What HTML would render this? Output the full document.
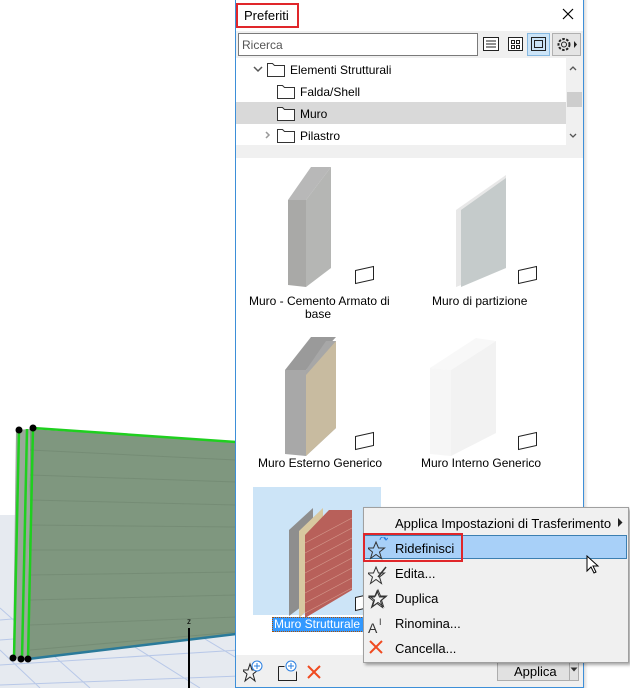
<!DOCTYPE html>
<html><head><meta charset="utf-8"><style>
*{margin:0;padding:0;box-sizing:border-box}
body{width:630px;height:688px;position:relative;overflow:hidden;background:#fff;font-family:"Liberation Sans",sans-serif;font-size:12px;color:#000}
.a{position:absolute}
.t{position:absolute;white-space:nowrap;font-size:12px}
</style></head><body>
<div class="a" style="left:0;top:515px;width:240px;height:173px;background:#e6eaf0"></div>
<svg class="a" style="left:0;top:0" width="240" height="688">
<g stroke="#b8c8e8" stroke-width="1" fill="none">
<path d="M0 620 L240 600 M0 640 L240 622 M0 665 L240 650 M0 685 L240 676 M0 608 L90 688 M0 650 L40 688 M60 600 L200 688 M140 600 L240 660"/>
</g>
<polygon points="30,429 236,442 236,634 28,659" fill="#7f977f"/>
<g stroke="#6f866f" stroke-width="1" opacity=".6">
<path d="M30 450 L236 460 M30 475 L236 482 M30 500 L236 505 M30 525 L236 527 M30 550 L236 550 M30 575 L236 572 M30 600 L236 595 M30 625 L236 617 M30 650 L236 632"/>
</g>
<polygon points="16,430 30,429 28,659 13,658" fill="#9aa89a"/>
<path d="M19 430 L14 658 M27 429 L22 659 M33 428 L28 659 M33 428 L236 442" stroke="#1fcf1f" stroke-width="2.5" fill="none"/>
<path d="M28 659 L236 634" stroke="#2a7a9a" stroke-width="2.5"/>
<g fill="#000"><circle cx="19" cy="430" r="3.5"/><circle cx="33" cy="428" r="3.5"/><circle cx="13" cy="658" r="3.5"/><circle cx="21" cy="659" r="3.5"/><circle cx="28" cy="659" r="3.5"/></g>
<path d="M189 628 L189 688" stroke="#000" stroke-width="2"/>
<text x="187" y="624" font-size="8" font-family="Liberation Sans">z</text>
</svg>

<div class="a" style="left:235px;top:0;width:349px;height:688px;background:#fff;border:1px solid #3d8fd8;border-top:none"></div>
<div class="a" style="left:584px;top:0;width:4px;height:688px;background:linear-gradient(90deg,#ddd,#fff)"></div>
<div class="t" style="left:244px;top:8px;font-size:13px">Preferiti</div>
<div class="a" style="left:236px;top:3px;width:63px;height:25px;border:2px solid #e0262a"></div>
<svg class="a" style="left:562px;top:8px" width="12" height="12"><path d="M1 1L11 11M11 1L1 11" stroke="#000" stroke-width="1.2"/></svg>
<div class="a" style="left:236px;top:31px;width:347px;height:27px;background:#f0f0f0"></div>
<div class="a" style="left:238px;top:33px;width:240px;height:23px;background:#fff;border:1px solid #7a7a7a"></div>
<div class="t" style="left:242px;top:38px;color:#555">Ricerca</div>
<svg class="a" style="left:482px;top:33px" width="100" height="23">
<rect x="1.5" y="4.5" width="15" height="13" fill="#fff" stroke="#222"/><path d="M4 8h10M4 11h10M4 14h10" stroke="#222"/>
<rect x="26.5" y="4.5" width="14" height="13" fill="#fff" stroke="#222"/><rect x="29.5" y="7.5" width="3" height="3" fill="none" stroke="#222"/><rect x="34.5" y="7.5" width="3" height="3" fill="none" stroke="#222"/><rect x="29.5" y="12.5" width="3" height="3" fill="none" stroke="#222"/><rect x="34.5" y="12.5" width="3" height="3" fill="none" stroke="#222"/>
<rect x="45.5" y="0.5" width="22" height="22" fill="#cce4f7" stroke="#86b8e0"/><rect x="49.5" y="4.5" width="14" height="13" fill="none" stroke="#222"/><rect x="52.5" y="7.5" width="8" height="7" fill="none" stroke="#222"/>
<rect x="70.5" y="0.5" width="28" height="22" fill="#e4e4e4" stroke="#b0b0b0"/><circle cx="82" cy="11.5" r="5.5" fill="none" stroke="#222" stroke-dasharray="2.5 1.5" stroke-width="2"/><circle cx="82" cy="11.5" r="2.5" fill="none" stroke="#222"/><path d="M92 8 L95 11.5 L92 15Z" fill="#222"/>
</svg>
<div class="a" style="left:236px;top:102px;width:330px;height:22px;background:#d9d9d9"></div>
<div class="a" style="left:566px;top:58px;width:17px;height:87px;background:#f0f0f0"></div>
<div class="a" style="left:567px;top:92px;width:15px;height:15px;background:#cdcdcd"></div>
<svg class="a" style="left:236px;top:58px" width="347" height="100">
<path d="M334 12l3-3 3 3M334 76l3 3 3-3" stroke="#555" fill="none" stroke-width="1.3"/>
<path d="M18 9l4 4 4-4" stroke="#555" fill="none" stroke-width="1.5"/>
<path d="M30 74l3 3-3 3" stroke="#999" fill="none" stroke-width="1.5"/>
<g fill="#fff" stroke="#333"><path d="M31.5 5.5h5l2 2h10v11h-17z"/><path d="M41.5 27.5h5l2 2h10v11h-17z"/><path d="M41.5 49.5h5l2 2h10v11h-17z"/><path d="M41.5 71.5h5l2 2h10v11h-17z"/></g>
<rect x="0" y="87" width="347" height="13" fill="#f0f0f0"/>
</svg>
<div class="t" style="left:290px;top:63px">Elementi Strutturali</div>
<div class="t" style="left:300px;top:85px">Falda/Shell</div>
<div class="t" style="left:300px;top:107px">Muro</div>
<div class="t" style="left:300px;top:129px">Pilastro</div>

<div class="a" style="left:253px;top:487px;width:128px;height:128px;background:#cce4f7"></div>
<svg class="a" style="left:236px;top:158px" width="347" height="497">
<polygon points="52,42 75,9 95,9 70,42" fill="#b8b8b8"/>
<polygon points="70,42 95,9 95,110 70,129" fill="#b5b6b4"/>
<polygon points="52,42 70,42 70,129 52,127" fill="#a9a9a7"/>
<polygon points="220,52 270,17 270,110 220,129" fill="#e8e8e8"/>
<polygon points="225,52 270,20 270,110 225,129" fill="#c5cbcb"/>
<polygon points="49,212 75,179 100,179 70,212" fill="#9a9a9a"/>
<polygon points="49,212 70,212 70,298 49,296" fill="#a8a8a8"/>
<polygon points="70,212 90,183 100,183 100,270 70,298" fill="#a7a7a7"/>
<polygon points="70,217 100,183 100,270 70,298" fill="#c8bba0"/>
<polygon points="215,212 260,183 260,275 215,298" fill="#f2f2f2"/>
<polygon points="194,210 240,180 260,183 215,212" fill="#f8f8f8"/>
<polygon points="194,210 215,212 215,298 194,296" fill="#f6f6f6"/>
<polygon points="53,372 77,350 77,440 53,458" fill="#8e8e8e"/>
<polygon points="63,373 87,350 87,438 63,460" fill="#d8c8a0"/>
<polygon points="69,377 93,352 116,352 116,432 69,460" fill="#b8605a"/>
<g stroke="#e0b0a0" stroke-width=".7" opacity=".7"><path d="M69 385L116 360M69 395L116 370M69 405L116 380M69 415L116 390M69 425L116 400M69 435L116 410M69 445L116 420M69 455L116 430"/></g>
<g fill="#fff" stroke="#222"><path d="M119.5 112.5l18-4v13l-18 4z"/><path d="M282.5 112.5l18-4v13l-18 4z"/><path d="M119.5 278.5l18-4v13l-18 4z"/><path d="M282.5 278.5l18-4v13l-18 4z"/><path d="M119.5 439.5l18-4v13l-18 4z"/></g>
</svg>
<div class="t" style="left:249px;top:294px">Muro - Cemento Armato di</div>
<div class="t" style="left:305px;top:307px">base</div>
<div class="t" style="left:432px;top:294px">Muro di partizione</div>
<div class="t" style="left:258px;top:456px">Muro Esterno Generico</div>
<div class="t" style="left:421px;top:456px">Muro Interno Generico</div>
<div class="a" style="left:272px;top:617px;width:92px;height:15px;background:#3399ff;border:1px dotted #b05000"></div>
<div class="t" style="left:274px;top:617px;color:#fff">Muro Strutturale</div>

<div class="a" style="left:236px;top:655px;width:347px;height:32px;background:#f0f0f0"></div>
<svg class="a" style="left:243px;top:660px" width="90" height="24">
<path d="M7 4l2 6h6l-5 4 2 7-5-4-5 4 2-7-5-4h6z" fill="none" stroke="#222"/>
<circle cx="14" cy="6" r="5" fill="#fff" stroke="#2a7fe0"/><path d="M14 3v6M11 6h6" stroke="#2a7fe0"/>
<path d="M35.5 6.5h6M35.5 6.5v14h18v-9" fill="none" stroke="#222"/>
<circle cx="48" cy="6" r="5" fill="#fff" stroke="#2a7fe0"/><path d="M48 3v6M45 6h6" stroke="#2a7fe0"/>
<path d="M65 6l12 12M77 6l-12 12" stroke="#f04a20" stroke-width="2"/>
</svg>
<div class="a" style="left:497px;top:660px;width:82px;height:21px;background:#e1e1e1;border:1px solid #adadad"></div>
<div class="a" style="left:569px;top:661px;width:1px;height:19px;background:#adadad"></div>
<div class="t" style="left:514px;top:664px;font-size:13px">Applica</div>
<svg class="a" style="left:570px;top:667px" width="9" height="6"><path d="M0.5 0.5h7l-3.5 4z" fill="#333"/></svg>

<div class="a" style="left:363px;top:507px;width:266px;height:156px;background:#f0f0f0;border:1px solid #a0a0a0;box-shadow:2px 2px 3px rgba(0,0,0,.35)"></div>
<div class="a" style="left:364px;top:535px;width:263px;height:24px;background:#a8d0f8;border:1px solid #3c7fb1"></div>
<div class="a" style="left:363px;top:533px;width:100px;height:29px;border:2px solid #e0262a"></div>
<div class="t" style="left:395px;top:516px;font-size:13px">Applica Impostazioni di Trasferimento</div>
<svg class="a" style="left:618px;top:518px" width="5" height="9"><path d="M0 0l4.5 4.5L0 9z" fill="#222"/></svg>
<div class="t" style="left:395px;top:541px;font-size:13px">Ridefinisci</div>
<div class="t" style="left:395px;top:566px;font-size:13px">Edita...</div>
<div class="t" style="left:395px;top:591px;font-size:13px">Duplica</div>
<div class="t" style="left:395px;top:616px;font-size:13px">Rinomina...</div>
<div class="t" style="left:395px;top:641px;font-size:13px">Cancella...</div>
<svg class="a" style="left:368px;top:537px" width="20" height="120">
<g fill="none" stroke="#333"><path d="M8 5l2.5 6h6l-5 4 2 6.5-5.5-4-5.5 4 2-6.5-5-4h6z"/>
<path d="M8 30l2.5 6h6l-5 4 2 6.5-5.5-4-5.5 4 2-6.5-5-4h6z"/><path d="M10 40l8-10" stroke-width="1.5"/>
<path d="M9 54l2.5 6h6l-5 4 2 6.5-5.5-4-5.5 4 2-6.5-5-4h6z"/><path d="M8 55l2.5 6h6l-5 4 2 6.5-5.5-4-5.5 4 2-6.5-5-4h6z" transform="translate(2,-2)"/></g>
<path d="M12 3a3 3 0 0 1 6 0M16 1l2 2 2-2" fill="none" stroke="#2a7fe0"/>
<text x="0" y="96" font-size="14" font-family="Liberation Sans" fill="#333">A</text><text x="11" y="88" font-size="9" font-family="Liberation Sans" fill="#333">I</text>
<path d="M2 104l12 12M14 104l-12 12" stroke="#f04a20" stroke-width="2"/>
</svg>
<svg class="a" style="left:586px;top:555px" width="14" height="20"><path d="M1 1v15l4-4 3 6 2-1-3-6h5z" fill="#fff" stroke="#000"/></svg>
</body></html>
